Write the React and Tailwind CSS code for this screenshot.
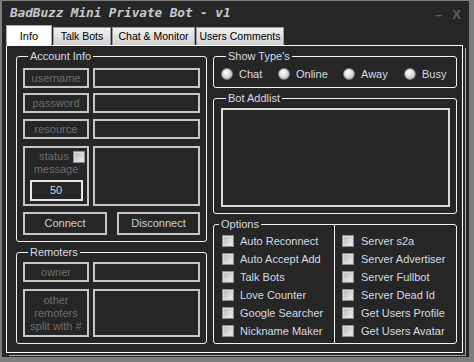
import React from "react";

const Group = ({ title, className = "", children }) => (
  <fieldset className={`min-w-0 rounded-[3px] border border-[#f2f2f2] ${className}`}>
    <legend className="ml-[5px] px-[2px] text-[11px] leading-[12px] text-[#d5dae3]">
      {title}
    </legend>
    {children}
  </fieldset>
);

const Box = ({ className = "", children }) => (
  <div className={`border-2 border-[#c6c6c6] ${className}`}>{children}</div>
);

const Check = () => (
  <span className="block h-[12px] w-[12px] shrink-0 border border-[#8e8e8e] bg-linear-to-br from-[#b4b4b4] to-[#f2f2f2] shadow-[inset_0_0_0_1px_#dcdcdc]" />
);

const Radio = () => (
  <span className="block h-[12px] w-[12px] shrink-0 rounded-full border border-[#7c7c7c] bg-[radial-gradient(circle_at_40%_35%,#ffffff_0%,#dedede_45%,#9c9c9c_100%)]" />
);

const Row = ({ label }) => (
  <div className="flex h-[20px] gap-[4px]">
    <Box className="flex w-[66px] items-center justify-center text-[#6d6d6d]">{label}</Box>
    <Box className="w-[107px]" />
  </div>
);

const leftOptions = [
  "Auto Reconnect",
  "Auto Accept Add",
  "Talk Bots",
  "Love Counter",
  "Google Searcher",
  "Nickname Maker",
];
const rightOptions = [
  "Server s2a",
  "Server Advertiser",
  "Server Fullbot",
  "Server Dead Id",
  "Get Users Profile",
  "Get Users Avatar",
];

const types = [
  { name: "Chat", w: "w-[57px]" },
  { name: "Online", w: "w-[65px]" },
  { name: "Away", w: "w-[61px]" },
  { name: "Busy", w: "" },
];

const tabs = [
  { name: "Talk Bots", w: "w-[58px]" },
  { name: "Chat & Monitor", w: "w-[83px]" },
  { name: "Users Comments", w: "w-[88px]" },
];

export default function App() {
  return (
    <div className="h-[362px] w-[474px] bg-[#7d7d7d] pb-[5px] pl-[2px] pr-[5px] pt-[1px] font-['Liberation_Sans',Arial,sans-serif] text-[11px] text-[#d5dae3]">
      <div className="flex h-full flex-col bg-[#262626]">
        {/* title bar */}
        <div className="flex h-[24px] items-center pl-[8px] pr-[8px]">
          <span className="font-['DejaVu_Sans_Mono',monospace] text-[12.8px] tracking-[-0.1px] font-bold italic text-[#c4c8cf]">
            BadBuzz Mini Private Bot - v1
          </span>
          <span className="ml-auto mt-[4px] text-[13px] font-bold text-[#5e5e5e]">–</span>
          <span className="ml-[10px] mt-[3px] text-[13px] font-bold text-[#5e5e5e]">X</span>
        </div>

        {/* tabs */}
        <div className="ml-[4px] flex h-[20px] items-end gap-[1px] text-[10.5px] text-black">
          <div className="relative z-10 -mb-[1px] flex h-[21px] w-[46px] items-center justify-center border border-b-0 border-[#a8a8a8] bg-white text-[11px]">
            Info
          </div>
          {tabs.map((t) => (
            <div
              key={t.name}
              className={`flex h-[18px] ${t.w} items-center justify-center whitespace-nowrap border border-b-0 border-[#9a9a9a] bg-linear-to-b from-[#f0f0f0] to-[#d2d2d2]`}
            >
              {t.name}
            </div>
          ))}
        </div>

        {/* panel */}
        <div className="ml-[4px] flex h-[308px] w-[457px] gap-[6px] border border-white pb-[8px] pl-[9px] pr-[5px] pt-[4px] shadow-[2px_2px_0_0_#262626,3px_3px_0_0_#a9a9a9]">
          {/* left column */}
          <div className="flex w-[191px] flex-col gap-[4px]">
            <Group title="Account Info" className="px-[6px] pb-[6px]">
              <div className="mt-[6px] flex flex-col">
                <Row label="username" />
                <div className="mt-[5px]">
                  <Row label="password" />
                </div>
                <div className="mt-[6px]">
                  <Row label="resource" />
                </div>
                <div className="mt-[7px] flex h-[60px] gap-[4px]">
                  <Box className="flex w-[66px] flex-col items-center pt-[2px] text-[#6d6d6d]">
                    <div className="flex items-center gap-[4px] pl-[12px] leading-[13px]">
                      status <Check />
                    </div>
                    <div className="leading-[12px]">message</div>
                    <div className="mt-[5px] flex h-[21px] w-[53px] items-center justify-center border-2 border-[#e6e6e6] text-[#d8d8d8]">
                      50
                    </div>
                  </Box>
                  <Box className="w-[107px]" />
                </div>
                <div className="mt-[6px] flex h-[23px] justify-between">
                  <Box className="flex w-[84px] items-center justify-center text-[#c9ced6]">Connect</Box>
                  <Box className="flex w-[83px] items-center justify-center text-[#c9ced6]">Disconnect</Box>
                </div>
              </div>
            </Group>

            <Group title="Remoters" className="px-[6px] pb-[6px]">
              <div className="mt-[4px] flex flex-col gap-[7px]">
                <Row label="owner" />
                <div className="flex h-[48px] gap-[4px]">
                  <Box className="flex w-[66px] items-center justify-center text-center leading-[13px] text-[#6d6d6d]">
                    other
                    <br />
                    remoters
                    <br />
                    split with #
                  </Box>
                  <Box className="w-[107px]" />
                </div>
              </div>
            </Group>
          </div>

          {/* right column */}
          <div className="flex flex-1 flex-col gap-[4px]">
            <Group title="Show Type's" className="pb-[6px] pl-[7px]">
              <div className="mt-[5px] flex h-[14px] items-center">
                {types.map((t) => (
                  <div key={t.name} className={`flex items-center gap-[6px] ${t.w}`}>
                    <Radio />
                    <span>{t.name}</span>
                  </div>
                ))}
              </div>
            </Group>

            <Group title="Bot Addlist" className="pb-[6px] pl-[7px] pr-[6px]">
              <div className="mt-[4px] h-[99px] border-2 border-[#dcdcdc]" />
            </Group>

            <Group title="Options">
              <div className="-mt-[6px] grid grid-cols-[121px_1fr]">
                <div className="flex flex-col border-r border-[#f2f2f2] pb-[3px] pl-[8px] pt-[8px]">
                  {leftOptions.map((o) => (
                    <div key={o} className="flex h-[18px] items-center gap-[6px]">
                      <Check />
                      <span>{o}</span>
                    </div>
                  ))}
                </div>
                <div className="flex flex-col pb-[3px] pl-[7px] pt-[8px]">
                  {rightOptions.map((o) => (
                    <div key={o} className="flex h-[18px] items-center gap-[7px]">
                      <Check />
                      <span>{o}</span>
                    </div>
                  ))}
                </div>
              </div>
            </Group>
          </div>
        </div>
      </div>
    </div>
  );
}
